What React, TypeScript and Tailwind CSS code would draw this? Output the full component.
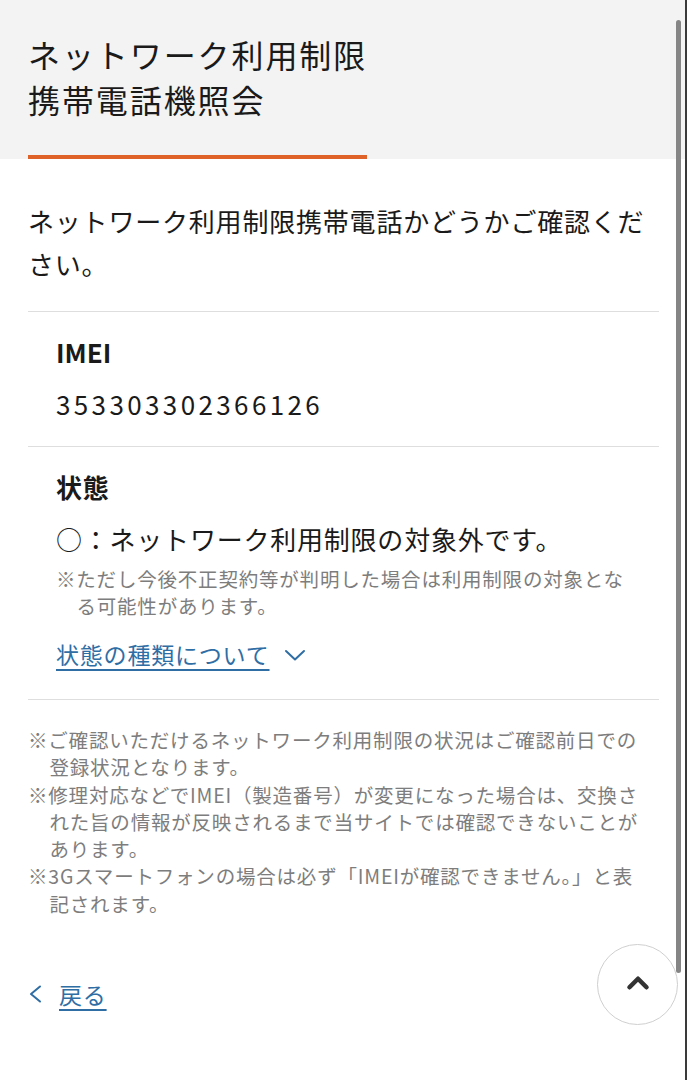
import { ChevronUp } from "lucide-react";

const FONT = { fontFamily: '"Noto Sans CJK JP", "Noto Sans", sans-serif' };

const notes = [
  "※ご確認いただけるネットワーク利用制限の状況はご確認前日での登録状況となります。",
  "※修理対応などでIMEI（製造番号）が変更になった場合は、交換された旨の情報が反映されるまで当サイトでは確認できないことがあります。",
  "※3Gスマートフォンの場合は必ず「IMEIが確認できません。」と表記されます。",
];

const App = () => {
  return (
    <div className="relative w-full bg-white text-[#1a1a1a] tracking-[0.05em]" style={FONT}>
      {/* Page header */}
      <div className="bg-[#f3f3f3] px-[28px] pt-[32px]">
        <h1 className="inline-block border-b-4 border-[#df6328] pb-[33px] text-[32px] leading-[45px] font-normal tracking-[0.06em]">
          ネットワーク利用制限
          <br />
          携帯電話機照会
        </h1>
      </div>

      <div className="px-[28px]">
        <p className="mt-[40px] mb-[26px] text-[26px] leading-[43px]">
          ネットワーク利用制限携帯電話かどうかご確認ください。
        </p>

        {/* IMEI */}
        <div className="border-t border-[#dedede] px-[28px] pt-[20px] pb-[23px]">
          <div className="text-[26px] leading-[39px] font-bold tracking-normal">IMEI</div>
          <div className="mt-[13px] text-[26px] leading-[39px] tracking-[0.13em]">353303302366126</div>
        </div>

        {/* Status */}
        <div className="border-t border-[#dedede] px-[28px] pt-[20px] pb-[28px]">
          <div className="text-[26px] leading-[39px] font-bold">状態</div>
          <div className="mt-[13px] text-[26px] leading-[40px] tracking-[0.03em]">○：ネットワーク利用制限の対象外です。</div>
          <p className="mt-[6px] pl-[1.05em] -indent-[1.05em] text-[19.5px] leading-[27px] text-[#7d7d7d]">
            ※ただし今後不正契約等が判明した場合は利用制限の対象となる可能性があります。
          </p>
          <div className="mt-[18px] flex items-center gap-[6px] text-[23px] leading-[34px] text-[#2f6ea5]">
            <span className="underline underline-offset-[5px] decoration-[1.5px]">状態の種類について</span>
            <svg width="22" height="12" viewBox="0 0 22 12" fill="none" stroke="currentColor" strokeWidth="2" strokeLinecap="round" strokeLinejoin="round" className="mt-[2px] ml-[8px]">
              <polyline points="2,2 11,10.5 20,2" />
            </svg>
          </div>
        </div>

        {/* Notes */}
        <div className="border-t border-[#dedede] pt-[26px] pr-[11px]">
          {notes.map((n) => (
            <p key={n} className="pl-[1.1em] -indent-[1.1em] text-[19.5px] leading-[27.3px] text-[#7d7d7d]">
              {n}
            </p>
          ))}
        </div>

        {/* Back */}
        <div className="mt-[60px] pb-[40px] flex items-center gap-[17px] text-[23px] leading-[34px] text-[#2f6ea5]">
          <svg width="13" height="18" viewBox="0 0 13 18" fill="none" stroke="currentColor" strokeWidth="2" strokeLinecap="round" strokeLinejoin="round" className="ml-[1px]">
            <polyline points="11,1.5 2,9 11,16.5" />
          </svg>
          <span className="underline underline-offset-[5px] decoration-[1.5px]">戻る</span>
        </div>
      </div>

      {/* Back to top */}
      <button className="fixed bottom-[55px] right-[9px] flex h-[81px] w-[81px] items-center justify-center rounded-full border-[1.5px] border-[#cfcfcf] bg-white text-[#333]">
        <ChevronUp className="h-[34px] w-[34px] -mt-[4px]" strokeWidth={3.2} />
      </button>

      {/* Overlay scrollbar */}
      <div className="fixed top-[20px] right-[6px] h-[953px] w-[5px] rounded-full bg-[#858585]" />
      <div className="fixed top-0 right-0 h-full w-[2px] bg-[#3a3a3a]" />
    </div>
  );
};

export default App;
